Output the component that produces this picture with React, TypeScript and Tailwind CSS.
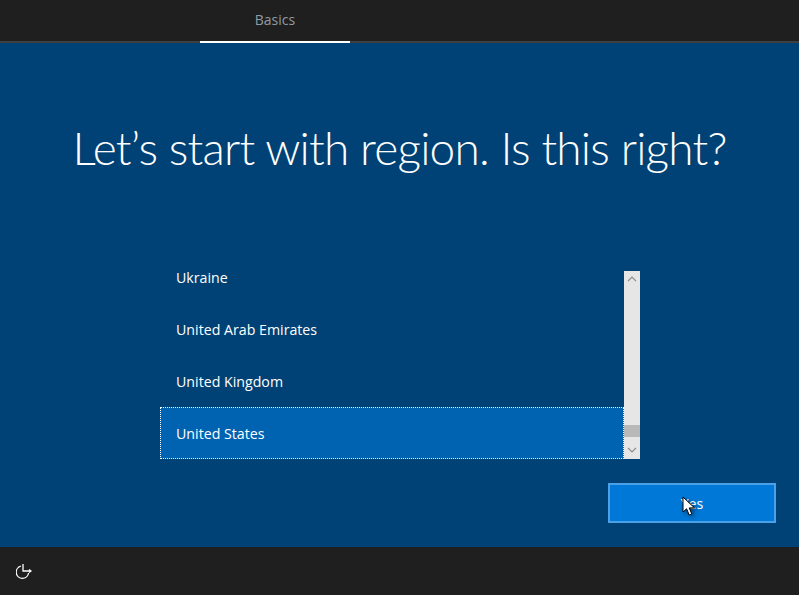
export default function App() {
  return (
    <div className="flex h-[595px] w-[799px] flex-col overflow-hidden bg-[#004275] text-white font-['Open_Sans',sans-serif]">
      <header className="flex h-[43px] flex-none border-b-2 border-[#3f3f3f] bg-[#1f1f1f] pl-[200px]">
        <div className="relative flex h-[41px] w-[150px] items-center justify-center pb-[2px] text-[14px] text-[#8f9ba5]">
          Basics
          <div className="absolute bottom-[-2px] left-0 h-[2px] w-full bg-white" />
        </div>
      </header>

      <main className="flex flex-1 flex-col">
        <h1 className="mt-[70px] text-center font-['Lato',sans-serif] text-[46px] leading-[70px] font-light tracking-[-0.8px] whitespace-nowrap text-white">
          Let’s start with region. Is this right?
        </h1>

        <div className="mt-[88px] ml-[160px] flex h-[188px] w-[480px]">
          <div className="w-[464px] text-[14.2px]">
            <div className="mt-[-20px]">
              <div className="flex h-[52px] items-center pt-[2px] pl-4">Ukraine</div>
              <div className="flex h-[52px] items-center pt-[2px] pl-4">United Arab Emirates</div>
              <div className="flex h-[52px] items-center pt-[2px] pl-4">United Kingdom</div>
              <div className="flex h-[52px] items-center border border-dotted border-white bg-[#0063b1] pt-[2px] pl-[15px]">United States</div>
            </div>
          </div>
          <div className="flex w-4 flex-col items-center bg-[#e6e6e6]">
            <svg className="mt-[5px]" width="10" height="6" viewBox="0 0 10 6" fill="none" stroke="#8a8a8a" strokeWidth="1.2">
              <path d="M1 5.2 5 1.2l4 4" />
            </svg>
            <div className="mt-[143px] h-3 w-full bg-[#b9b9b9]" />
            <svg className="mt-[10px]" width="10" height="6" viewBox="0 0 10 6" fill="none" stroke="#8a8a8a" strokeWidth="1.2">
              <path d="M1 .8l4 4 4-4" />
            </svg>
          </div>
        </div>

        <div className="relative mt-6 ml-[608px]">
          <button className="flex h-10 w-[168px] items-center justify-center border-2 border-[#4ca0e6] bg-[#0078d7] pt-[2px] text-[14.2px] text-white">
            Yes
          </button>
          <svg className="absolute top-[13px] left-[74px] drop-shadow-[2px_2px_2px_rgba(0,0,0,0.45)]" width="14" height="20" viewBox="0 0 14 20">
            <path d="M1 1v15l3.6-3.2L7.2 19l2.6-1.1-2.6-6H12.5z" fill="#fff" stroke="#000" strokeWidth="1" />
          </svg>
        </div>
      </main>

      <footer className="flex h-12 flex-none items-center bg-[#1f1f1f] pl-4">
        <svg width="17" height="17" viewBox="0 0 17 17" fill="none" stroke="#fff" strokeWidth="1.3">
          <path d="M4.8 3.2A6.2 6.2 0 1 0 12.6 10" />
          <path d="M7 1v7h7" />
          <path d="M13 6.4 15 8 13 9.6" />
        </svg>
      </footer>
    </div>
  );
}
